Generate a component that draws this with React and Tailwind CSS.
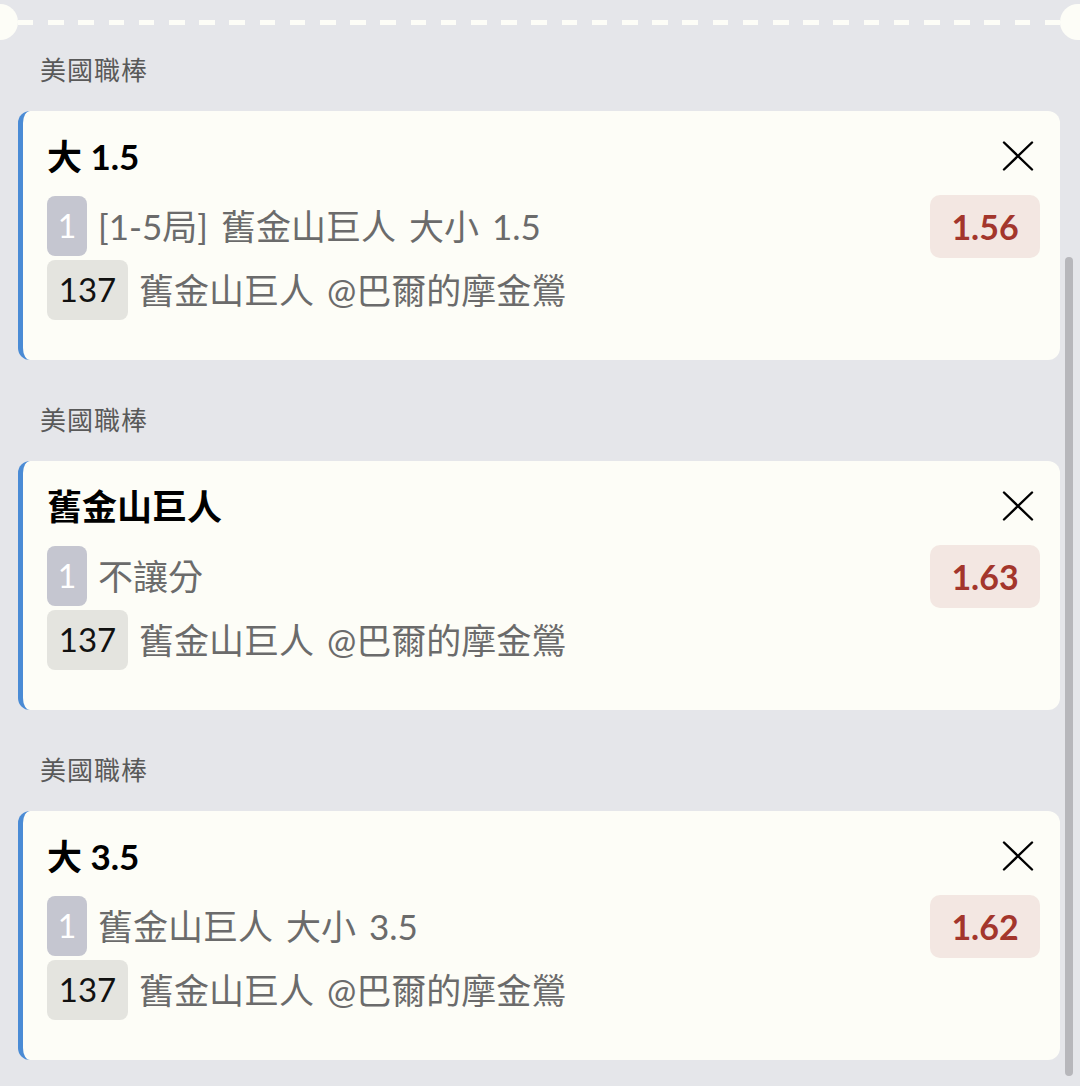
const bets = [
  { title: '大 1.5', pick: '[1-5局] 舊金山巨人 大小 1.5', odds: '1.56' },
  { title: '舊金山巨人', pick: '不讓分', odds: '1.63' },
  { title: '大 3.5', pick: '舊金山巨人 大小 3.5', odds: '1.62' },
];

function CloseIcon() {
  return (
    <svg width="32" height="30" viewBox="0 0 32 30" className="mr-[6px] text-black" fill="none" stroke="currentColor" strokeWidth="2.4" strokeLinecap="round">
      <path d="M2 1.5 L30 28.5 M30 1.5 L2 28.5" />
    </svg>
  );
}

function BetCard({ bet }) {
  return (
    <div className="ml-[18px] mr-[20px] h-[249px] rounded-xl border-l-[5px] border-[#4a8bd5] bg-[#fdfdf7] pl-[24px] pr-[20px] pt-[23px]">
      <div className="flex h-[44px] items-center justify-between">
        <div className="text-[35px] font-bold leading-[44px] text-black">{bet.title}</div>
        <CloseIcon />
      </div>
      <div className="mt-[16px] flex h-[64px] items-center justify-between">
        <div className="flex items-center gap-[11px]">
          <span className="flex h-[60px] w-[40px] items-center justify-center rounded-lg bg-[#c5c6d0] text-[32px] text-white">1</span>
          <span className="text-[35px] text-[#6b6b6b] [word-spacing:4px]">{bet.pick}</span>
        </div>
        <span className="flex h-[63px] w-[110px] items-center justify-center rounded-[10px] bg-[#f3e7e2] text-[34px] font-bold text-[#a3362c]">
          {bet.odds}
        </span>
      </div>
      <div className="mt-[2px] flex h-[60px] items-center gap-[11px]">
        <span className="flex h-[60px] w-[81px] items-center justify-center rounded-lg bg-[#e4e4df] text-[33px] text-[#111]">137</span>
        <span className="text-[35px] text-[#6b6b6b] [word-spacing:4px]">舊金山巨人 @巴爾的摩金鶯</span>
      </div>
    </div>
  );
}

export default function App() {
  return (
    <div className="relative h-[1086px] w-[1080px] overflow-hidden bg-[#e5e6ea] font-['Lato','Noto_Sans_CJK_TC',sans-serif]">
      <div className="flex h-[44px] items-center">
        <div className="h-[36px] w-[18px] rounded-r-full bg-[#fdfdf7]" />
        <div className="h-[5px] flex-1 bg-[repeating-linear-gradient(90deg,#fdfdf7_0px,#fdfdf7_15.5px,transparent_15.5px,transparent_30.2px)]" />
        <div className="h-[36px] w-[20px] rounded-l-full bg-[#fdfdf7]" />
      </div>

      {bets.map((bet, i) => (
        <section key={i} className={i === 0 ? 'mt-[8px]' : 'mt-[42px]'}>
          <div className="mb-[23px] pl-[40px] text-[26px] leading-[36px] tracking-[1px] text-[#595959]">美國職棒</div>
          <BetCard bet={bet} />
        </section>
      ))}

      <div className="absolute right-[7px] top-[257px] h-[819px] w-[8px] rounded-full bg-[#b7b7bb]" />
    </div>
  );
}
